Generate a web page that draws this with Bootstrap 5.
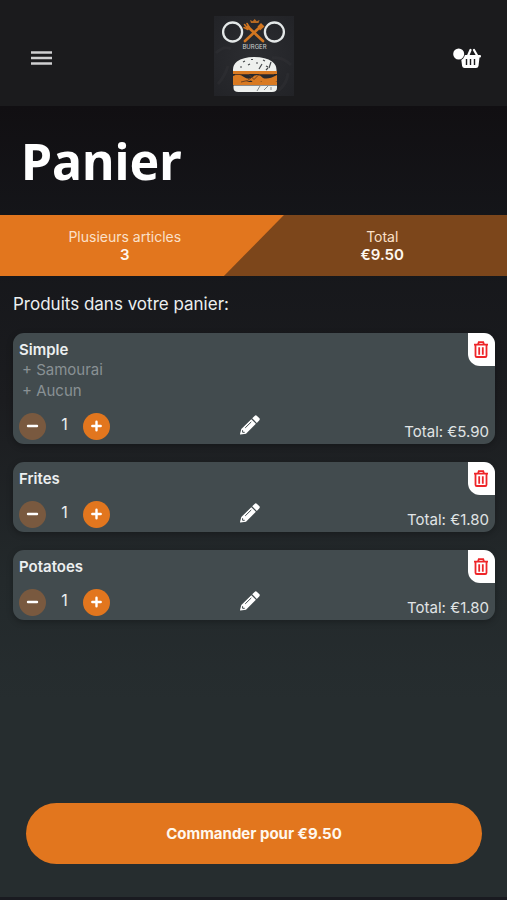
<!DOCTYPE html>
<html lang="fr">
<head>
<meta charset="utf-8">
<meta name="viewport" content="width=device-width, initial-scale=1">
<title>Panier</title>
<link rel="stylesheet" href="https://cdn.jsdelivr.net/npm/bootstrap@5.3.0/dist/css/bootstrap.min.css">
<style>
  :root { --brand: #e2761e; --brand-dark: #7c461b; --tile: #424b4e; }
  body {
    font-family: Inter, "Liberation Sans", sans-serif;
    font-size: 15px; line-height: 21px; color: #eceff0;
    background: linear-gradient(#110f12 106px, #15161a 230px, #1b1c1f 400px, #23292b 580px, #262d2f 700px);
    border-bottom: 3px solid #191a20;
  }
  .top-bar { background: #1b1b1d; padding: 16px 26px 10px 31px; }
  .side { flex: 1 1 0; padding-top: 3px; }
  .logo { margin-right: 4px; }
  .page-title { font: 700 50px/60px "Noto Sans", sans-serif; color: #fff; padding: 25px 21px 24px; margin: 0; }
  .summary { line-height: 18px; padding: 13px 0 12px; background: var(--brand-dark); position: relative; }
  .summary::before {
    content: ""; position: absolute; inset: 0; background: var(--brand);
    clip-path: polygon(0 0, 56% 0, calc(56% - 60px) 100%, 0 100%);
  }
  .summary dl { position: relative; }
  .summary dt { font-size: 14px; font-weight: 400; color: #fbe0c9; }
  .summary dt, .summary dd { margin: 0; }
  .summary dd { font-weight: 600; color: #fff8f0; }
  .summary .amount dt { color: #dfcbbb; }
  .basket { padding: 0 12px 0 13px; }
  .basket h2 { font-size: 17px; line-height: 24px; font-weight: 400; margin: 16px 0 17px; }
  .products { gap: 18px; }
  .product { background: var(--tile); border-radius: 11px; padding: 6px 6px 4px; position: relative; box-shadow: 0 2px 6px #0004; }
  .product h3 { font-size: 15px; line-height: 21px; font-weight: 600; margin: 0; }
  .extras { gap: 1px; line-height: 20px; color: #899194; padding-left: 3px; }
  .controls { margin-top: 12px; }
  .controls > div { flex: 1 1 0; }
  .round { width: 27px; height: 27px; border: 0; border-radius: 50%; padding: 0; background: var(--brand); }
  .round:disabled { background: #79593f; }
  .round svg, .edit svg, .delete svg, .side svg { display: block; margin: auto; }
  .count { width: 37px; font-size: 16px; line-height: 21px; padding-bottom: 4px; }
  .edit, .side button { background: none; border: 0; padding: 0; }
  .edit { margin-right: 8px; padding-top: 2px; }
  .sum { line-height: 16px; color: #e0e4e5; padding-top: 11px; }
  .delete { position: absolute; top: 0; right: 0; width: 27px; height: 33px; padding: 0 1px 0 0; border: 0; background: #fff; border-radius: 0 11px 0 12px; }
  .order-bar { padding: 24px 25px 33px 26px; }
  .order { background: var(--brand); color: #fff8ee; font-size: 15px; line-height: 21px; font-weight: 700; border: 0; padding: 20px; }
</style>
<script src="https://cdn.jsdelivr.net/npm/bootstrap@5.3.0/dist/js/bootstrap.bundle.min.js"></script>
</head>
<body class="d-flex flex-column min-vh-100">
<svg class="d-none" aria-hidden="true">
  <symbol id="minus" viewBox="0 0 27 27"><path d="M9 13h9" stroke="#fff" stroke-width="2.4" stroke-linecap="round"/></symbol>
  <symbol id="plus" viewBox="0 0 27 27"><path d="M9.300 13h8.400M13.500 8.800v8.400" stroke="#fff" stroke-width="2.400" stroke-linecap="round"/></symbol>
  <symbol id="pencil" viewBox="0 0 20 20"><path fill="#fff" d="M1.300 14.100 11.300 4.200 15.900 8.800 6 18.700.500 19.600Q0 19.600 0 19.100ZM12.200 3.300 14.600.900q1.200-1.200 2.400 0l2.200 2.200q1.200 1.200 0 2.400L16.800 7.900Z"/><path d="M5.200 12.900 11.300 6.900M2.600 15.200v2.100h2.100" fill="none" stroke="#424b4e" stroke-width="1"/></symbol>
  <symbol id="trash" viewBox="0 0 14 17"><path d="M0 3.700h14M4 3.500l.800-2.400h4.400l.800 2.400M1.500 4v10.700q0 1.300 1.300 1.300h8.400q1.300 0 1.300-1.300V4M5.200 6.200v7.600M8.800 6.200v7.600" fill="none" stroke="#ee2529" stroke-width="1.800"/></symbol>
</svg>

<header class="top-bar d-flex align-items-center">
  <div class="side">
    <button type="button" aria-label="Menu" class="d-block"><svg width="21" height="14" viewBox="0 0 21 14"><path d="M0 1.500h21M0 7h21M0 12.500h21" stroke="#d0d0d1" stroke-width="2.400"/></svg></button>
  </div>
  <a href="#" aria-label="OXO Burger" class="logo">
    <svg class="d-block" width="80" height="80" viewBox="0 0 80 80">
      <defs><radialGradient id="slate" r=".7"><stop stop-color="#2c2d31"/><stop offset="1" stop-color="#222327"/></radialGradient></defs>
      <rect width="80" height="80" fill="url(#slate)"/>
      <path d="M2 37q8-8 15-4M58 42q10-2 19 7M4 68q7-8 10-18M64 75q9-7 10-18" stroke="#37393d" stroke-width="3" fill="none" opacity=".3"/>
      <g fill="none" stroke="#e4e8e8" stroke-width="2.300"><circle cx="18.600" cy="16" r="9.500"/><circle cx="60.400" cy="16" r="9.500"/></g>
      <g stroke="#d37620" fill="none" stroke-linecap="round"><path d="M34 11 49 25M46 11 31 25" stroke-width="2.700"/><path d="M30.500 8.500 34 12.500M33 7.500l2.500 4M30 11.500l4 2" stroke-width="1.600"/></g>
      <path d="M43.500 10.500 47 7 50.500 10.500 46 14.500Z" fill="#d37620"/>
      <path d="M37 7 36 4l2.700 1.300L40.700 3l2 2.300L45.500 4l-1 3Z" fill="#b76a22"/>
      <text x="40.500" y="33" text-anchor="middle" font-family="Inter, sans-serif" font-size="6" fill="#cfd2d3">BURGER</text>
      <path d="M19 55q-.500-6 4-9.500Q29 41 40 41q12 0 18 4.500 5 3.500 4.500 9.500Z" fill="#eef0ee"/>
      <path d="M29 46l2-1M37 43.500h2M42 47h2M49 44l2 1M34 49l2-1M26 51h2M52 50l2 1M45 53l3-5M57 46l-2 6M52 54l2-2" stroke="#44474a" stroke-width="1.200"/>
      <path d="M19 56.500h44M19 67.500h44" stroke="#d97a22" stroke-width="2.800"/>
      <path d="M19 60q6-3 11 1 5 4 10-1 5-3 9 2 5 2 14-3v6.500q-9 3-16 0-5 5-10-1-7 3-18 2Z" fill="#d97a22"/>
      <path d="M21 58.500h14l5 5 5-5h15M27 66q8-1 10-4" stroke="#623b20" stroke-width=".900" fill="none"/>
      <path d="M19.500 69.500H63v2.500q0 4-5 4H24.500q-5 0-5-4Z" fill="#eef0ee"/>
      <path d="M43 75l3-5M50 74l4-4M57 74v-3" stroke="#85898a" stroke-width="1"/>
    </svg>
  </a>
  <div class="side d-flex justify-content-end">
    <button type="button" aria-label="Voir le panier"><svg width="28" height="22" viewBox="0 0 28 22"><path d="m14.500 10 3-7M21 3l4 7" stroke="#fff" stroke-width="2.200" stroke-linecap="round"/><path d="M8 8h19q1 0 1 1.200T27 10.500h-.500L25.500 19q-.400 2-2.400 2H11.500q-2 0-2.400-2L8 10.500Z" fill="#fff"/><path d="M13.500 12v6M17.500 12v6M21.500 12v6" stroke="#1b1b1d" stroke-width="1.400"/><circle cx="5.700" cy="7" r="6.300" fill="#1b1b1d"/><circle cx="5.700" cy="7" r="5.500" fill="#fff"/></svg></button>
  </div>
</header>

<main>
  <h1 class="page-title">Panier</h1>
  <div class="summary d-flex text-center">
    <dl class="col-6 m-0 pe-1"><dt>Plusieurs articles</dt><dd>3</dd></dl>
    <dl class="col-6 m-0 ps-1"><dt>Total</dt><dd>€9.50</dd></dl>
  </div>
  <section class="basket">
    <h2>Produits dans votre panier:</h2>
    <div class="products d-grid">
      <article class="product">
        <h3>Simple</h3>
        <ul class="extras list-unstyled d-flex flex-column m-0"><li>+ Samourai</li><li>+ Aucun</li></ul>
        <button type="button" class="delete" aria-label="Supprimer Simple"><svg width="14" height="17"><use href="#trash"/></svg></button>
        <div class="controls d-flex align-items-start">
          <div class="d-flex align-items-center">
            <button type="button" class="round" disabled aria-label="Retirer"><svg width="27" height="27"><use href="#minus"/></svg></button>
            <span class="count text-center">1</span>
            <button type="button" class="round" aria-label="Ajouter"><svg width="27" height="27"><use href="#plus"/></svg></button>
          </div>
          <button type="button" class="edit" aria-label="Modifier"><svg width="20" height="20"><use href="#pencil"/></svg></button>
          <div class="sum text-end">Total: €5.90</div>
        </div>
      </article>
      <article class="product">
        <h3>Frites</h3>
        <button type="button" class="delete" aria-label="Supprimer Frites"><svg width="14" height="17"><use href="#trash"/></svg></button>
        <div class="controls d-flex align-items-start">
          <div class="d-flex align-items-center">
            <button type="button" class="round" disabled aria-label="Retirer"><svg width="27" height="27"><use href="#minus"/></svg></button>
            <span class="count text-center">1</span>
            <button type="button" class="round" aria-label="Ajouter"><svg width="27" height="27"><use href="#plus"/></svg></button>
          </div>
          <button type="button" class="edit" aria-label="Modifier"><svg width="20" height="20"><use href="#pencil"/></svg></button>
          <div class="sum text-end">Total: €1.80</div>
        </div>
      </article>
      <article class="product">
        <h3>Potatoes</h3>
        <button type="button" class="delete" aria-label="Supprimer Potatoes"><svg width="14" height="17"><use href="#trash"/></svg></button>
        <div class="controls d-flex align-items-start">
          <div class="d-flex align-items-center">
            <button type="button" class="round" disabled aria-label="Retirer"><svg width="27" height="27"><use href="#minus"/></svg></button>
            <span class="count text-center">1</span>
            <button type="button" class="round" aria-label="Ajouter"><svg width="27" height="27"><use href="#plus"/></svg></button>
          </div>
          <button type="button" class="edit" aria-label="Modifier"><svg width="20" height="20"><use href="#pencil"/></svg></button>
          <div class="sum text-end">Total: €1.80</div>
        </div>
      </article>
    </div>
  </section>
</main>

<footer class="order-bar mt-auto">
  <button type="button" class="order w-100 rounded-pill">Commander pour €9.50</button>
</footer>
</body>
</html>
